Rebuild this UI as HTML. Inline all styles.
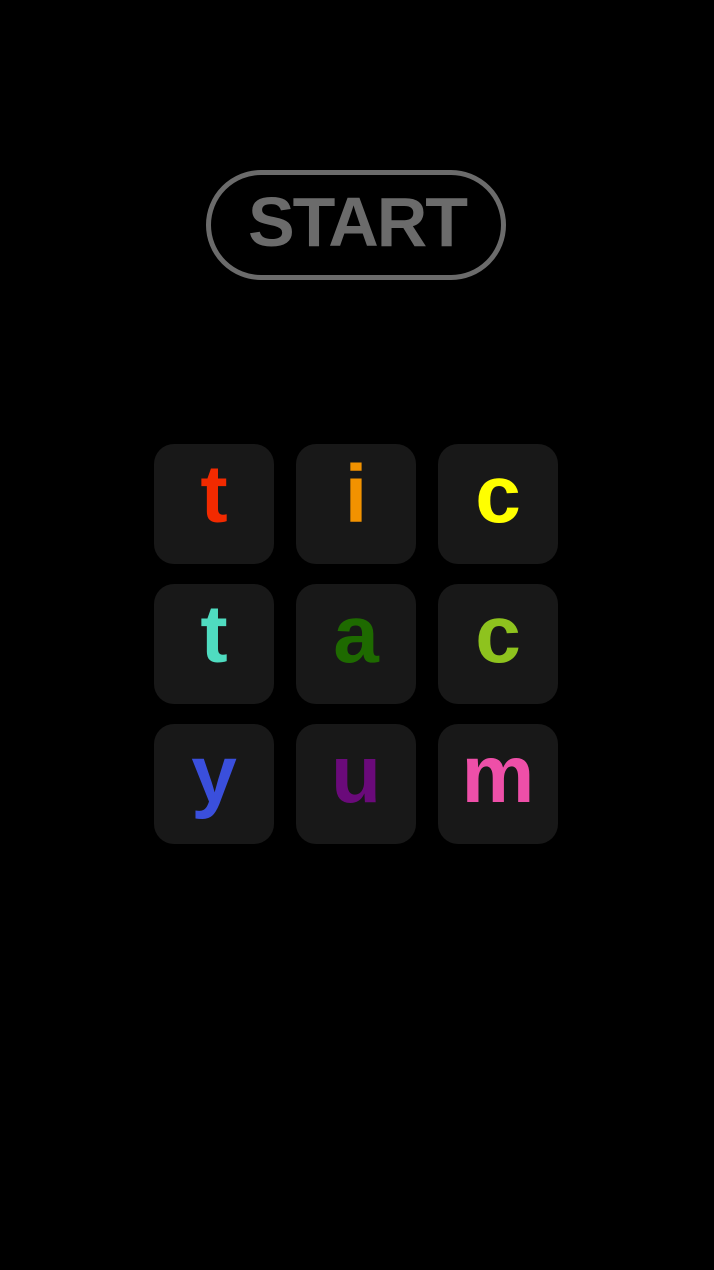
<!DOCTYPE html>
<html><head><style>
html,body{margin:0;padding:0;background:#000;width:714px;height:1270px;overflow:hidden;font-family:"Liberation Sans",sans-serif}
.btn{position:absolute;left:206px;top:170px;width:290px;height:100px;border:5px solid #6b6b6b;border-radius:55px}
.st{position:absolute;left:0;width:714px;top:186px;text-align:center;color:#6b6b6b;font-weight:bold;font-size:70px;line-height:72px;letter-spacing:-2px}
.t{position:absolute;width:120px;height:120px;background:#181818;border-radius:20px}
.t span{position:absolute;left:0;right:0;top:11px;text-align:center;font-size:82px;line-height:80px;font-weight:bold}
</style></head><body>
<div class="btn"></div>
<div class="st">START</div>
<div class="t" style="left:154px;top:444px"><span style="color:#f22a00">t</span></div>
<div class="t" style="left:296px;top:444px"><span style="color:#f29200">i</span></div>
<div class="t" style="left:438px;top:444px"><span style="color:#ffff00">c</span></div>
<div class="t" style="left:154px;top:584px"><span style="color:#4fdcc0">t</span></div>
<div class="t" style="left:296px;top:584px"><span style="color:#1e6a00">a</span></div>
<div class="t" style="left:438px;top:584px"><span style="color:#8ec31e">c</span></div>
<div class="t" style="left:154px;top:724px"><span style="color:#3a4fdc">y</span></div>
<div class="t" style="left:296px;top:724px"><span style="color:#6a0a7a">u</span></div>
<div class="t" style="left:438px;top:724px"><span style="color:#ee4fa8">m</span></div>
</body></html>
